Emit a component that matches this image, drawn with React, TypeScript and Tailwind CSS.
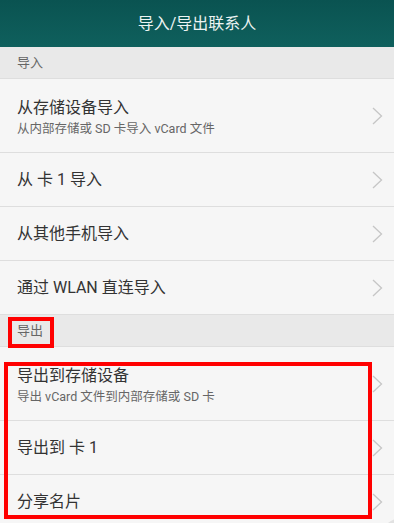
import React from "react";

interface RowProps {
  title: string;
  sub?: string;
}

const Chevron = () => (
  <svg width="11" height="18" viewBox="0 0 11 18" fill="none">
    <polyline points="1,1 9.5,9 1,17" stroke="#c6c6c6" strokeWidth="1.3" />
  </svg>
);

const Section = ({ label }: { label: string }) => (
  <div className="h-[32px] flex items-center px-[17px] bg-[#e9e9e9] border-b border-[#dedede] text-[13px] text-[#666]">
    {label}
  </div>
);

const Row: React.FC<RowProps> = ({ title, sub }) => {
  return (
    <div
      className={
        "flex items-center justify-between pl-[17px] pr-[11px] bg-[#f6f6f6] border-b border-[#dedede] " +
        (sub ? "h-[74px]" : "h-[54px]")
      }
    >
      <div className={"flex flex-col " + (sub ? "pt-[4px]" : "")}>
        <span className="text-[16px] leading-[20px] text-[#333]">{title}</span>
        {sub && (
          <span className="text-[12.5px] leading-[16px] mt-[3px] text-[#666]">{sub}</span>
        )}
      </div>
      <Chevron />
    </div>
  );
};

export default function App() {
  return (
    <div
      className="relative w-[394px] h-[523px] overflow-hidden bg-[#f6f6f6]"
      style={{ fontFamily: "Roboto, 'Noto Sans CJK SC', sans-serif" }}
    >
      <div className="h-[47px] flex items-center justify-center bg-gradient-to-b from-[#0a5351] to-[#0f605d] text-[16px] text-[#edf4f3]">
        导入/导出联系人
      </div>
      <Section label="导入" />
      <Row title="从存储设备导入" sub="从内部存储或 SD 卡导入 vCard 文件" />
      <Row title="从 卡 1 导入" />
      <Row title="从其他手机导入" />
      <Row title="通过 WLAN 直连导入" />
      <Section label="导出" />
      <Row title="导出到存储设备" sub="导出 vCard 文件到内部存储或 SD 卡" />
      <Row title="导出到 卡 1" />
      <Row title="分享名片" />

      {/* floating circle peeking at bottom right */}
      <div className="absolute left-[376px] top-[517px] w-[60px] h-[60px] rounded-full bg-[#e2e2e2]" />

      {/* red annotation boxes */}
      <div className="absolute left-[8px] top-[317px] w-[46px] h-[31px] border-[4px] border-[#ff0000]" />
      <div className="absolute left-[4px] top-[362px] w-[368px] h-[157px] border-[4px] border-[#ff0000]" />
    </div>
  );
}
